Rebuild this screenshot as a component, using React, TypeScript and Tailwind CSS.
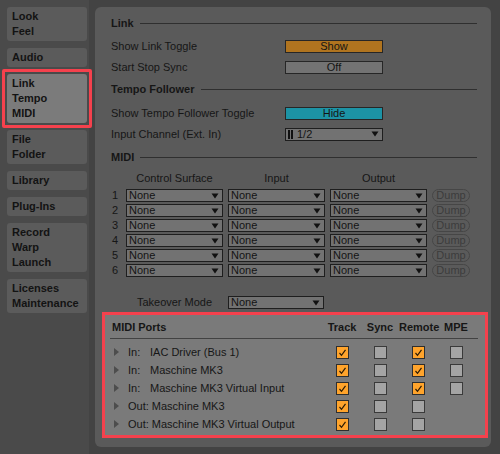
import React from "react";

const FONT = "font-['Liberation_Sans',Arial,sans-serif]";

const sideItems: { lines: string[]; active?: boolean }[] = [
  { lines: ["Look", "Feel"] },
  { lines: ["Audio"] },
  { lines: ["Link", "Tempo", "MIDI"], active: true },
  { lines: ["File", "Folder"] },
  { lines: ["Library"] },
  { lines: ["Plug-Ins"] },
  { lines: ["Record", "Warp", "Launch"] },
  { lines: ["Licenses", "Maintenance"] },
];

const ports = [
  { dir: "In:", name: "IAC Driver (Bus 1)", track: true, sync: false, remote: true, mpe: false },
  { dir: "In:", name: "Maschine MK3", track: true, sync: false, remote: true, mpe: false },
  { dir: "In:", name: "Maschine MK3 Virtual Input", track: true, sync: false, remote: true, mpe: false },
  { dir: "Out:", name: "Maschine MK3", track: true, sync: false, remote: false, mpe: null },
  { dir: "Out:", name: "Maschine MK3 Virtual Output", track: true, sync: false, remote: false, mpe: null },
];

function Arrow() {
  return (
    <svg width="8" height="6" viewBox="0 0 8 6" className="shrink-0">
      <polygon points="0.5,0.5 7.5,0.5 4,5.5" fill="#111" />
    </svg>
  );
}

function Dropdown({ label, width = "w-[97px]" }: { label: React.ReactNode; width?: string }) {
  return (
    <div className={`${width} h-[13px] flex items-center justify-between border border-[#1e1e1e] bg-[#727272] pl-[2px] pr-[3px] text-[11px] leading-none text-[#141414]`}>
      <span className="flex items-center">{label}</span>
      <Arrow />
    </div>
  );
}

function Heading({ title }: { title: string }) {
  return (
    <div className="h-[14px] flex items-center">
      <span className="text-[11px] font-bold text-[#161616]">{title}</span>
      <div className="ml-[6px] flex-1 h-px bg-[#2f2f2f]" />
    </div>
  );
}

function Row({ label, children, mt }: { label: string; children: React.ReactNode; mt: string }) {
  return (
    <div className={`${mt} h-[14px] flex items-center`}>
      <span className="w-[174px] text-[11px] text-[#161616]">{label}</span>
      {children}
    </div>
  );
}

function Toggle({ text, bg }: { text: string; bg: string }) {
  return (
    <div className={`w-[98px] h-[13px] flex items-center justify-center border border-[#262626] ${bg} text-[11px] leading-none text-[#141414]`}>
      {text}
    </div>
  );
}

function Check({ on }: { on: boolean | null }) {
  if (on === null) return <div className="w-[13px] h-[13px]" />;
  if (!on) return <div className="w-[13px] h-[13px] border border-[#3a3a3a] bg-[#a4a4a4]" />;
  return (
    <div className="w-[13px] h-[13px] border border-[#2e2e2e] bg-[#ffa42c] flex items-center justify-center">
      <svg width="11" height="11" viewBox="0 0 11 11">
        <polyline points="2.5,6 4.5,8.3 8.5,2.8" fill="none" stroke="#2a1a05" strokeWidth="1.2" />
      </svg>
    </div>
  );
}

export default function App() {
  return (
    <div className={`w-[500px] h-[454px] flex bg-[#434343] overflow-hidden ${FONT}`}>
      {/* left nav */}
      <div className="w-[89px] h-full bg-[#4a4a4a] flex flex-col gap-[7px] pt-[7px] pl-[7px]">
        {sideItems.map((item) => (
          <div
            key={item.lines[0]}
            className={`relative w-[80px] rounded-[3px] py-[2px] px-[5px] ${
              item.active ? "bg-[#7b7b7b]" : "bg-[#5b5b5b]"
            }`}
          >
            {item.active && (
              <div className="absolute -inset-[5px] border-[3px] border-[#f5414d] rounded-[2px]" />
            )}
            {item.lines.map((l) => (
              <div key={l} className="h-[15px] leading-[15px] text-[11px] font-bold text-[#131313]">
                {l}
              </div>
            ))}
          </div>
        ))}
      </div>

      {/* settings panel */}
      <div className="ml-[6px] mt-[7px] w-[396px] h-[440px] rounded-[6px] bg-[#5a5a5a] pl-[16px] pr-[14px] pt-[9px] flex flex-col">
        <Heading title="Link" />
        <Row label="Show Link Toggle" mt="mt-[9px]">
          <Toggle text="Show" bg="bg-[#b0741f]" />
        </Row>
        <Row label="Start Stop Sync" mt="mt-[7px]">
          <Toggle text="Off" bg="bg-[#737373]" />
        </Row>

        <div className="mt-[8px]">
          <Heading title="Tempo Follower" />
        </div>
        <Row label="Show Tempo Follower Toggle" mt="mt-[10px]">
          <Toggle text="Hide" bg="bg-[#1c93a5]" />
        </Row>
        <Row label="Input Channel (Ext. In)" mt="mt-[7px]">
          <Dropdown
            width="w-[98px]"
            label={
              <>
                <span className="w-[2px] h-[9px] bg-[#111]" />
                <span className="ml-[1px] w-[2px] h-[9px] bg-[#111]" />
                <span className="ml-[4px]">1/2</span>
              </>
            }
          />
        </Row>

        <div className="mt-[9px]">
          <Heading title="MIDI" />
        </div>

        {/* control surfaces */}
        <div className="mt-[7px] h-[14px] flex items-center text-[11px] text-[#161616]">
          <span className="w-[15px]" />
          <span className="w-[97px] text-center">Control Surface</span>
          <span className="ml-[5px] w-[97px] text-center">Input</span>
          <span className="ml-[5px] w-[97px] text-center">Output</span>
        </div>
        <div className="mt-[4px] flex flex-col gap-[2px]">
          {[1, 2, 3, 4, 5, 6].map((n) => (
            <div key={n} className="h-[13px] flex items-center gap-[5px] text-[11px] text-[#161616]">
              <span className="w-[10px] pl-[1px]">{n}</span>
              <Dropdown label="None" />
              <Dropdown label="None" />
              <Dropdown label="None" />
              <div className="w-[38px] h-[13px] rounded-full border border-[#464646] flex items-center justify-center leading-none text-[#3c3c3c]">
                Dump
              </div>
            </div>
          ))}
        </div>
        <div className="mt-[19px] h-[13px] flex items-center text-[11px] text-[#161616]">
          <span className="w-[15px]" />
          <span className="w-[97px] text-center">Takeover Mode</span>
          <div className="ml-[5px]">
            <Dropdown label="None" width="w-[96px]" />
          </div>
        </div>

        {/* midi ports */}
        <div className="mt-[6px] ml-[-6px] mr-[-8px] h-[120px] bg-[#7a7a7a] outline-[3px] outline-solid outline-[#f5414d] pt-[5px] pr-[10px] text-[11px] text-[#161616]">
          <div className="h-[14px] flex items-center font-bold">
            <span className="flex-1 pl-[7px]">MIDI Ports</span>
            <span className="w-[38px] text-center">Track</span>
            <span className="w-[38px] text-center">Sync</span>
            <span className="w-[38px] text-center">Remote</span>
            <span className="w-[38px] text-center">MPE</span>
          </div>
          <div className="mt-[4px] ml-[5px] mr-[-3px] h-px bg-[#424242]" />
          <div className="mt-[4px] flex flex-col">
            {ports.map((p, i) => (
              <div key={i} className="h-[18px] flex items-center">
                <div className="flex-1 flex items-center pl-[9px]">
                  <svg width="5" height="8" viewBox="0 0 5 8" className="mr-[9px]">
                    <polygon points="0,0 5,4 0,8" fill="#4d4d4d" />
                  </svg>
                  {p.dir === "In:" ? (
                    <span className="w-[22px]">In:</span>
                  ) : (
                    <span className="mr-[3px]">Out:</span>
                  )}
                  <span>{p.name}</span>
                </div>
                <div className="w-[38px] flex justify-center"><Check on={p.track} /></div>
                <div className="w-[38px] flex justify-center"><Check on={p.sync} /></div>
                <div className="w-[38px] flex justify-center"><Check on={p.remote} /></div>
                <div className="w-[38px] flex justify-center"><Check on={p.mpe} /></div>
              </div>
            ))}
          </div>
        </div>
      </div>
    </div>
  );
}
